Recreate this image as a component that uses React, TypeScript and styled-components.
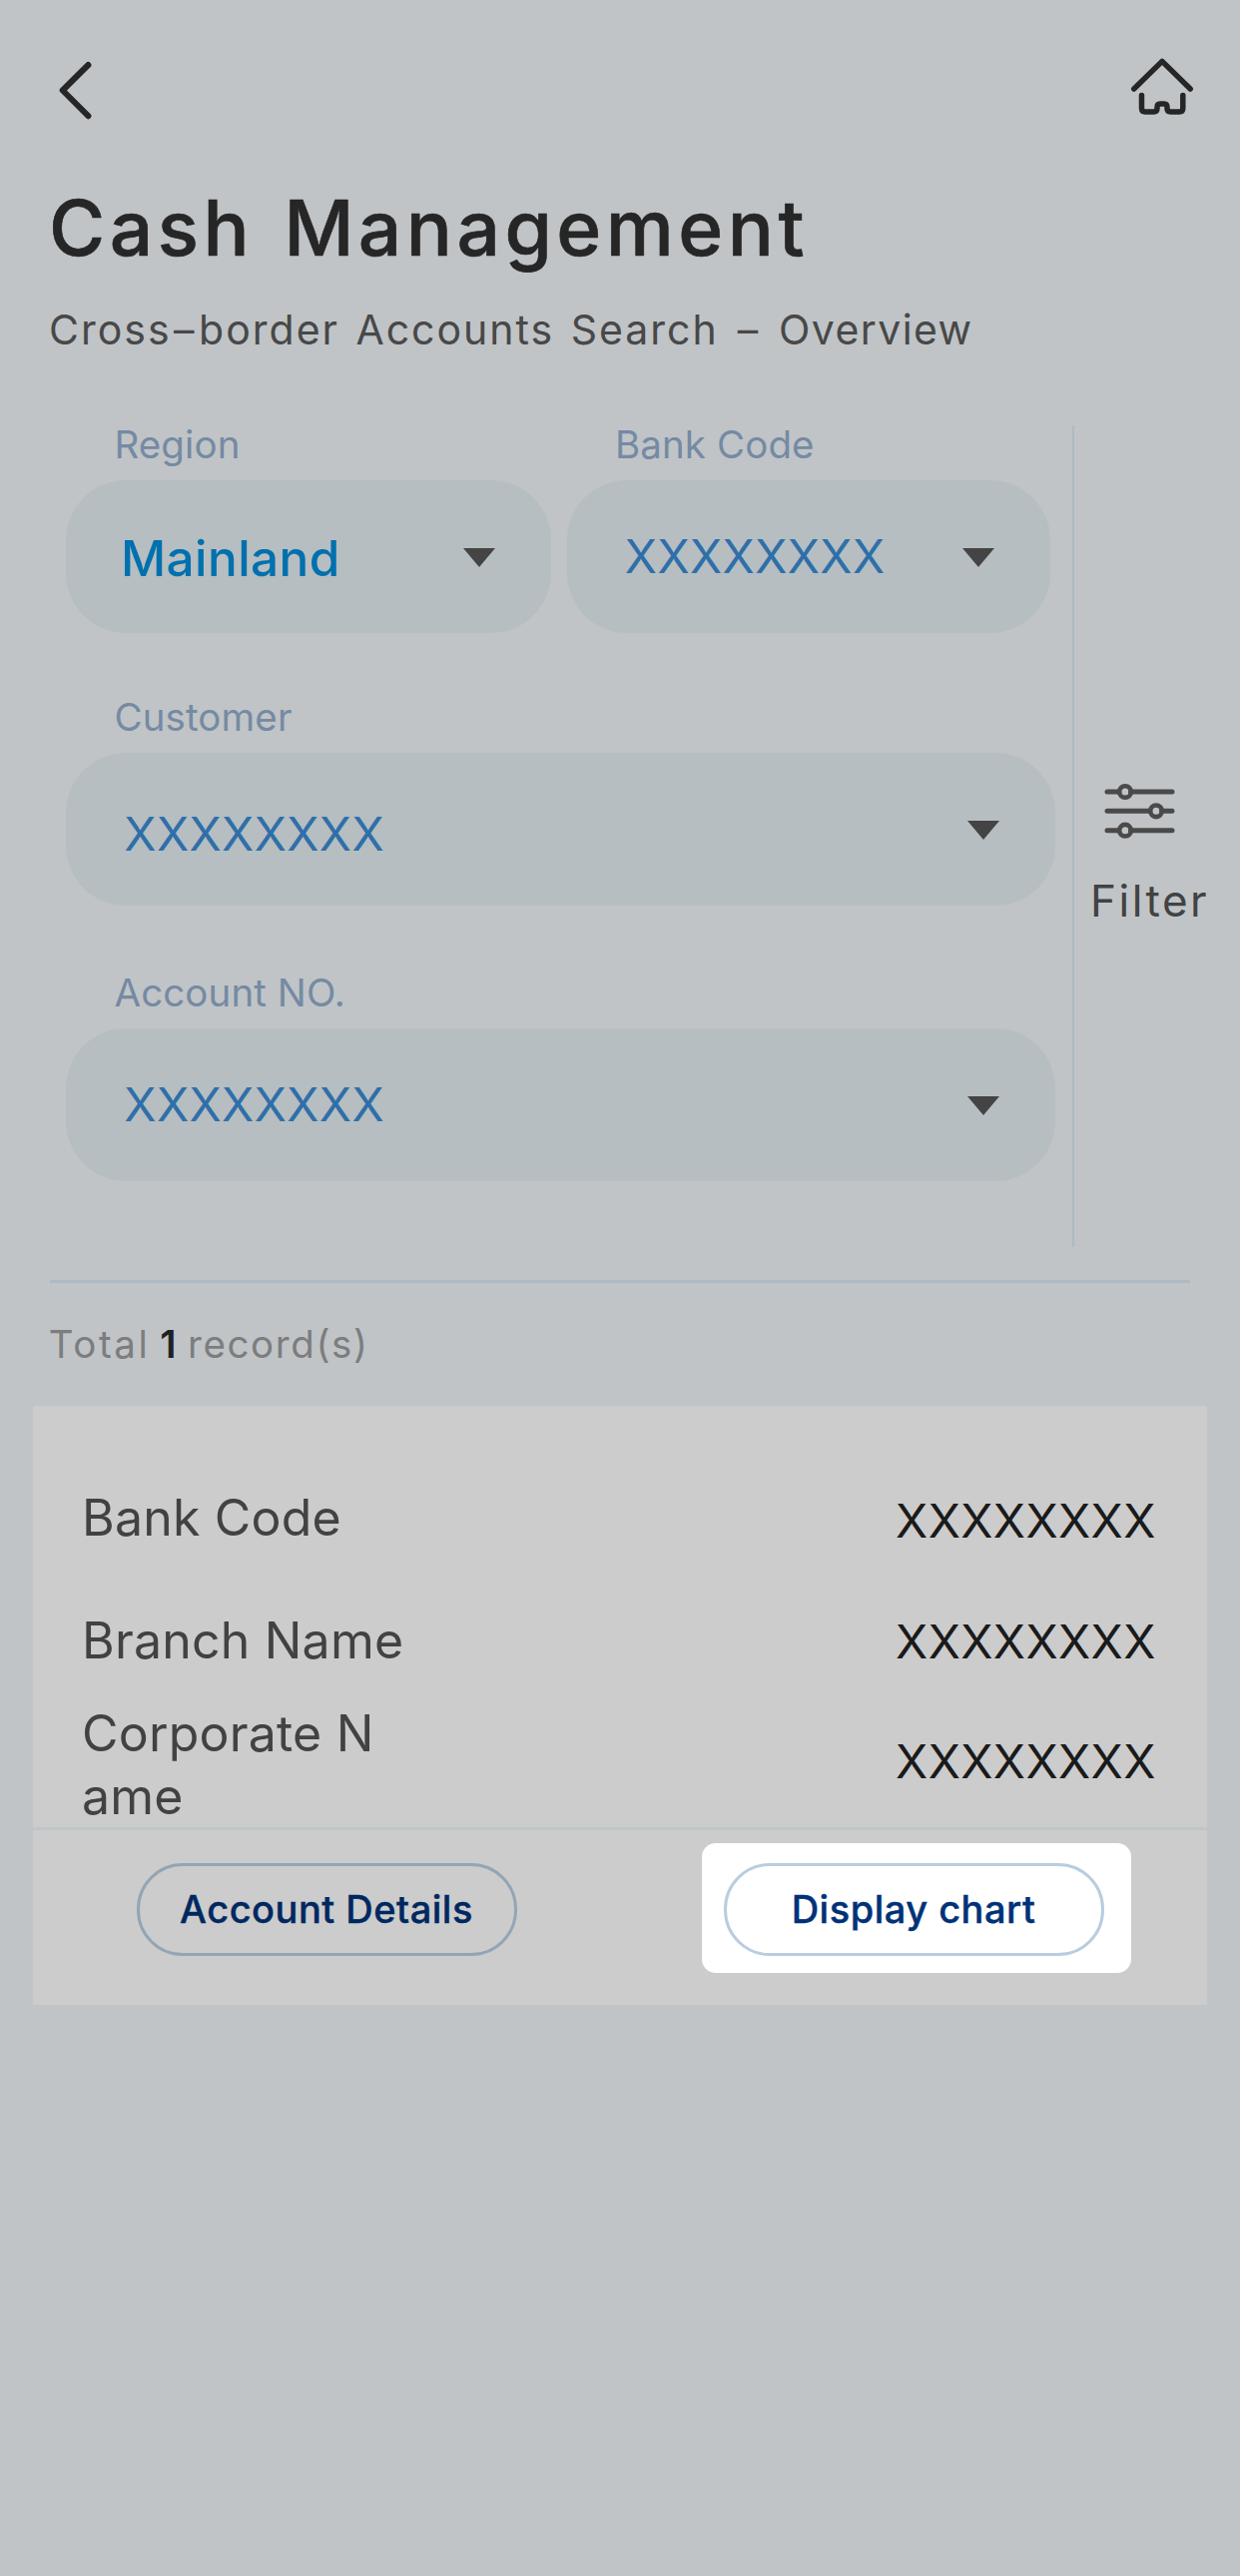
import React from "react";
import styled, { createGlobalStyle } from "styled-components";

const GlobalStyle = createGlobalStyle`
  * { box-sizing: border-box; }
  body {
    margin: 0;
    background: #c0c4c7;
    font-family: Inter, "Liberation Sans", sans-serif;
  }
  button { font: inherit; }
`;

const Page = styled.main`
  width: 1242px;
  height: 2580px;
  background: #c0c4c7;
  color: #424242;
  overflow: hidden;
`;

const TopBar = styled.header`
  display: flex;
  justify-content: space-between;
  align-items: flex-start;
  height: 182px;
  padding: 56px 44px 0 56px;
`;

const Title = styled.h1`
  margin: 0 0 0 49px;
  font-size: 76.6px;
  line-height: 92px;
  font-weight: 500;
  letter-spacing: 4.5px;
  word-spacing: 5.5px;
  color: #262626;
  -webkit-text-stroke: 0.6px #262626;
  white-space: nowrap;
`;

const Subtitle = styled.p`
  margin: 31px 0 0 49px;
  font-size: 41px;
  line-height: 50px;
  letter-spacing: 2px;
  word-spacing: 2.9px;
  color: #484848;
  white-space: nowrap;
`;

const Dash = styled.span`
  margin: 0 2.5px;
`;

const LastWord = styled.span`
  letter-spacing: 1.4px;
`;

const SearchPanel = styled.section`
  display: flex;
  height: 827px;
  margin-top: 67px;
`;

const Form = styled.div`
  width: 1074px;
  padding-left: 66px;
`;

const FieldRow = styled.div<{ $gap: number }>`
  display: flex;
  gap: 16px;
  margin-top: ${(p) => p.$gap}px;
`;

const Field = styled.div<{ $width: number }>`
  width: ${(p) => p.$width}px;
`;

const FieldLabel = styled.div`
  padding-left: 48.5px;
  font-size: 38.5px;
  line-height: 46px;
  letter-spacing: 0.1px;
  color: #758aa3;
  white-space: nowrap;
`;

const SelectBox = styled.div`
  display: flex;
  align-items: center;
  justify-content: space-between;
  height: 153px;
  margin-top: 13px;
  padding: 0 56px 0 55px;
  border-radius: 60px;
  background: #b6bec1;
`;

const SelectValue = styled.span<{ $strong?: boolean; $shift: number }>`
  margin-top: ${(p) => p.$shift * 2}px;
  padding-left: ${(p) => (p.$strong ? 0 : 3.3)}px;
  font-size: ${(p) => (p.$strong ? 49.5 : 47.2)}px;
  font-weight: ${(p) => (p.$strong ? 500 : 400)};
  line-height: 60px;
  letter-spacing: 0.4px;
  color: ${(p) => (p.$strong ? "#0070ae" : "#2f6fa9")};
`;

const Caret = styled.i`
  width: 0;
  height: 0;
  margin-top: 1px;
  border-left: 16px solid transparent;
  border-right: 16px solid transparent;
  border-top: 19px solid #444444;
`;

const VerticalRule = styled.div`
  width: 2px;
  margin-top: 4px;
  background: #aebac3;
`;

const FilterColumn = styled.div`
  display: flex;
  flex-direction: column;
  align-items: flex-start;
  padding: 360px 0 0 16px;
`;

const FilterLabel = styled.span`
  margin-top: 29px;
  font-size: 44px;
  line-height: 54px;
  letter-spacing: 2.5px;
  color: #424242;
`;

const FilterIcon = styled.svg`
  margin-left: 11px;
`;

const Divider = styled.div`
  height: 3px;
  margin: 33px 50px 0;
  background: #aebac3;
`;

const Total = styled.p`
  display: flex;
  margin: 38px 0 0 48.8px;
  font-size: 38.5px;
  line-height: 46px;
  color: #7c7d7e;
  letter-spacing: 1.6px;

  span { letter-spacing: 2.6px; }
  strong {
    margin: 0 11.6px 0 9.7px;
    font-weight: 600;
    letter-spacing: 0;
    color: #1f2224;
  }
`;

const Card = styled.section`
  height: 600px;
  margin: 39px 33px 0;
  background: #cccccc;
`;

const Details = styled.div`
  height: 422px;
  padding: 81px 51.2px 0 49px;
`;

const DetailRow = styled.div<{ $gap: number }>`
  display: flex;
  justify-content: space-between;
  align-items: center;
  margin-bottom: ${(p) => p.$gap}px;
`;

const DetailLabel = styled.span`
  font-size: 50px;
  line-height: 63px;
  letter-spacing: 0.2px;
  color: #424242;
  white-space: nowrap;
`;

const DetailValue = styled.span<{ $shift: number }>`
  margin-top: ${(p) => p.$shift * 2}px;
  font-size: 47.2px;
  line-height: 47px;
  letter-spacing: 0.4px;
  color: #1a1a1a;
`;

const Actions = styled.footer`
  display: flex;
  justify-content: space-between;
  align-items: flex-start;
  padding: 13px 76px 0 103.5px;
  border-top: 3px solid #bfc5c8;
`;

const PillButton = styled.button<{ $lit?: boolean }>`
  display: block;
  width: 381px;
  height: 93px;
  margin: ${(p) => (p.$lit ? 0 : "20px 0 0")};
  padding: 0 0 2px;
  border: 3px solid ${(p) => (p.$lit ? "#b8cde0" : "#93a5b4")};
  border-radius: 46px;
  background: transparent;
  color: ${(p) => (p.$lit ? "#003278" : "#002860")};
  font-size: 38px;
  font-weight: 500;
  line-height: 46px;
  letter-spacing: 0.5px;
  -webkit-text-stroke: 0.4px currentColor;
`;

const Spotlight = styled.div`
  padding: 20px 27.5px 17px 21.5px;
  border-radius: 14px;
  background: #ffffff;
`;

const MASK = "XXXXXXXX";

const BackIcon = () => (
  <svg width="42" height="70" viewBox="0 0 42 70" fill="none" stroke="#262626" strokeWidth="6" strokeLinecap="round" strokeLinejoin="round">
    <path d="M32.4 9 L6.7 34.5 L32.4 60.2" />
  </svg>
);

const HomeIcon = () => (
  <svg width="68" height="66" viewBox="0 0 68 66" fill="none" stroke="#262626" strokeWidth="5.5" strokeLinecap="round" strokeLinejoin="round">
    <path d="M5.8 33 L34 5.4 L62.2 33" />
    <path d="M13.5 39.5 V52.5 Q13.5 56 17 56 H25.5 Q29 56 29 52.5 V51.5 Q29 48 32 48 H36 Q39 48 39 51.5 V52.5 Q39 56 42.5 56 H51.3 Q54.8 56 54.8 52.5 V39.5" />
  </svg>
);

const SlidersIcon = () => (
  <FilterIcon width="76" height="64" viewBox="0 0 76 64" fill="none" stroke="#4a4a4a" strokeWidth="5" strokeLinecap="round">
    <path d="M6 11 H17.5 M29.5 11 H71" />
    <path d="M6 30.3 H48.5 M60.5 30.3 H71" />
    <path d="M6 49.7 H17.5 M29.5 49.7 H71" />
    <circle cx="24" cy="11" r="5.8" strokeWidth="4.6" />
    <circle cx="55" cy="30.3" r="5.8" strokeWidth="4.6" />
    <circle cx="24" cy="49.7" r="5.8" strokeWidth="4.6" />
  </FilterIcon>
);

interface SelectFieldProps {
  label: string;
  value: string;
  width: number;
  shift: number;
  strong?: boolean;
}

const SelectField = ({ label, value, width, shift, strong }: SelectFieldProps) => (
  <Field $width={width}>
    <FieldLabel>{label}</FieldLabel>
    <SelectBox>
      <SelectValue $strong={strong} $shift={shift}>{value}</SelectValue>
      <Caret />
    </SelectBox>
  </Field>
);

export default function App() {
  return (
    <Page>
      <GlobalStyle />
      <TopBar>
        <BackIcon />
        <HomeIcon />
      </TopBar>
      <Title>Cash Management</Title>
      <Subtitle>
        Cross<Dash>–</Dash>border Accounts Search <Dash>–</Dash> <LastWord>Overview</LastWord>
      </Subtitle>

      <SearchPanel>
        <Form>
          <FieldRow $gap={0}>
            <SelectField label="Region" value="Mainland" width={485.5} shift={1} strong />
            <SelectField label="Bank Code" value={MASK} width={484} shift={-1} />
          </FieldRow>
          <FieldRow $gap={61}>
            <SelectField label="Customer" value={MASK} width={991.4} shift={4.5} />
          </FieldRow>
          <FieldRow $gap={64}>
            <SelectField label="Account NO." value={MASK} width={991.4} shift={-1} />
          </FieldRow>
        </Form>
        <VerticalRule />
        <FilterColumn>
          <SlidersIcon />
          <FilterLabel>Filter</FilterLabel>
        </FilterColumn>
      </SearchPanel>

      <Divider />
      <Total>
        <span>Total</span>
        <strong>1</strong>
        record(s)
      </Total>

      <Card>
        <Details>
          <DetailRow $gap={60}>
            <DetailLabel>Bank Code</DetailLabel>
            <DetailValue $shift={2}>{MASK}</DetailValue>
          </DetailRow>
          <DetailRow $gap={30}>
            <DetailLabel>Branch Name</DetailLabel>
            <DetailValue $shift={0}>{MASK}</DetailValue>
          </DetailRow>
          <DetailRow $gap={0}>
            <DetailLabel>
              Corporate N<br />ame
            </DetailLabel>
            <DetailValue $shift={-5}>{MASK}</DetailValue>
          </DetailRow>
        </Details>
        <Actions>
          <PillButton>Account Details</PillButton>
          <Spotlight>
            <PillButton $lit>Display chart</PillButton>
          </Spotlight>
        </Actions>
      </Card>
    </Page>
  );
}
